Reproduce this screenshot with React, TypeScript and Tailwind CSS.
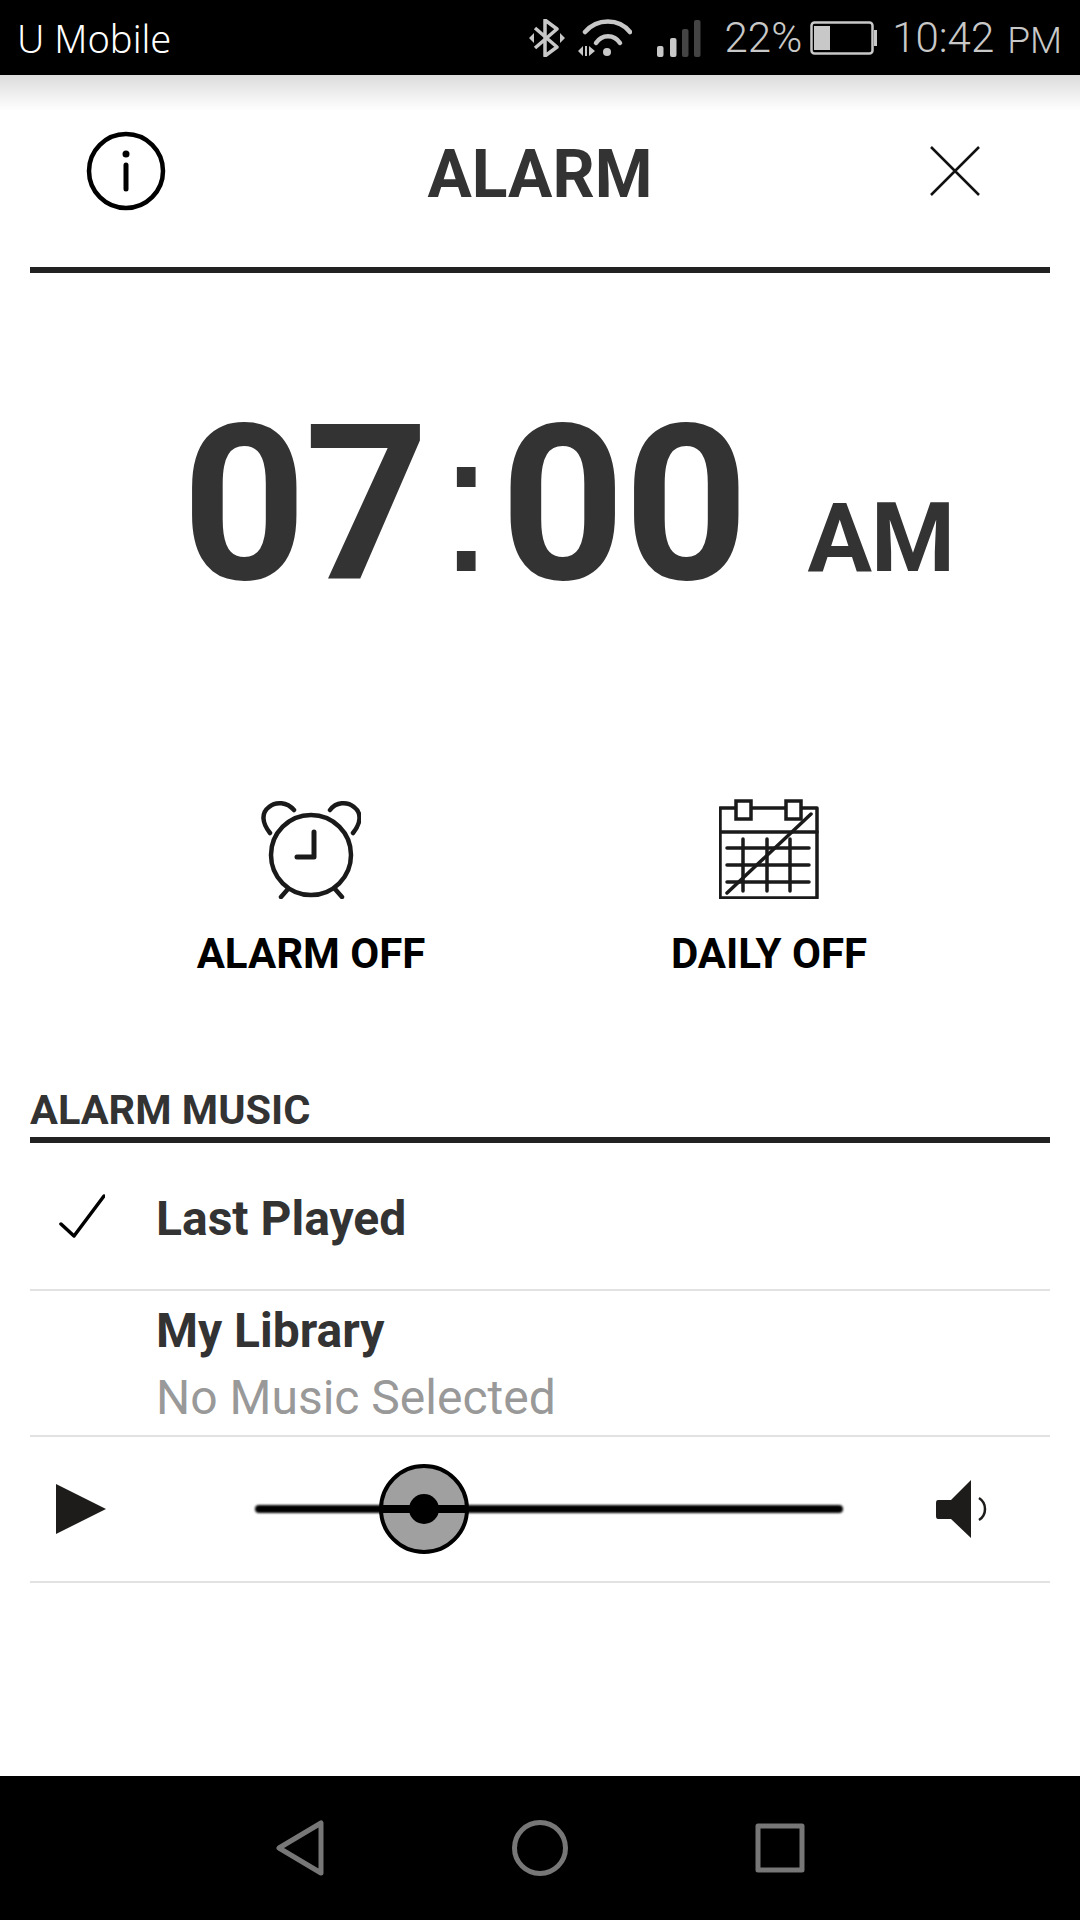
import { useState } from "react";

const roboto = "font-['Roboto',sans-serif]";

function Bluetooth() {
  return (
    <svg width="36" height="38" viewBox="0 0 36 38" fill="none" stroke="#c8c8c8" strokeWidth="3.5">
      <path d="M6 9 L28 28 L16 37 V1 L28 10 L6 29" strokeLinejoin="round" />
      <path d="M0 19 L5 14 V24 Z M36 19 L31 14 V24 Z" fill="#c8c8c8" stroke="none" />
    </svg>
  );
}

function Wifi() {
  return (
    <svg width="54" height="38" viewBox="0 0 54 38" fill="none" stroke="#c8c8c8" strokeWidth="4.5" strokeLinecap="round">
      <path d="M7 13 C19 -1 41 -1 52 13" />
      <path d="M18 24 C24 15 36 15 42 24" />
      <circle cx="29" cy="33" r="4" fill="#c8c8c8" stroke="none" />
      <path d="M0 32 L5 27 V37 Z M7 27 H9 V37 H7 Z M11 27 L17 32 L11 37 Z" fill="#c8c8c8" stroke="none" />
    </svg>
  );
}

function Signal() {
  return (
    <svg width="44" height="38" viewBox="0 0 44 38">
      <rect x="0" y="27" width="6.5" height="11" rx="2" fill="#c8c8c8" />
      <rect x="13" y="19" width="6.5" height="19" rx="2" fill="#c8c8c8" />
      <rect x="25" y="10" width="6.5" height="28" rx="2" fill="#444444" />
      <rect x="37" y="1" width="6.5" height="37" rx="2" fill="#444444" />
    </svg>
  );
}

function Battery() {
  return (
    <svg width="67" height="34" viewBox="0 0 67 34" fill="none">
      <rect x="1.5" y="1.5" width="61" height="31" rx="3" stroke="#c8c8c8" strokeWidth="2.5" />
      <rect x="4" y="5" width="16" height="24" fill="#c8c8c8" />
      <path d="M64 9 H67 V25 H64 Z" fill="#c8c8c8" />
    </svg>
  );
}

function StatusBar() {
  return (
    <div className="flex h-[75px] items-center bg-black pl-[17px] pr-[18px]">
      <span className="font-['Noto_Sans',sans-serif] text-[38px] font-light leading-none text-white">U Mobile</span>
      <div className={`ml-auto flex items-center text-[#c8c8c8] font-light ${roboto}`}>
        <Bluetooth />
        <span className="w-[13px]" />
        <Wifi />
        <span className="w-[25px]" />
        <Signal />
        <span className="w-[24px]" />
        <span className="text-[42px] leading-none">22%</span>
        <span className="w-[8px]" />
        <Battery />
        <span className="w-[15px]" />
        <span className="text-[42px] leading-none">10:42</span>
        <span className="ml-[13px] mt-[5px] text-[37px] leading-none">PM</span>
      </div>
    </div>
  );
}

function Header() {
  return (
    <div className="mx-[30px] grid h-[198px] grid-cols-[1fr_auto_1fr] items-center border-b-[6px] border-[#222222]">
      <svg width="80" height="80" viewBox="0 0 80 80" fill="none" stroke="#000" strokeLinecap="round" className="ml-[56px]">
        <circle cx="40" cy="40" r="37" strokeWidth="4.5" />
        <circle cx="40" cy="23" r="3.5" fill="#000" stroke="none" />
        <path d="M40 34 V58" strokeWidth="5" />
      </svg>
      <h1 className={`mt-[8px] text-[66px] font-bold leading-none text-[#333333] ${roboto}`}>ALARM</h1>
      <svg width="50" height="50" viewBox="0 0 50 50" stroke="#111" strokeWidth="2.5" className="mr-[70px] justify-self-end">
        <path d="M1 1 L49 49 M49 1 L1 49" />
      </svg>
    </div>
  );
}

function TimeDisplay() {
  return (
    <div className={`flex h-[526px] items-baseline pl-[182px] pt-[118px] font-bold leading-none text-[#333333] ${roboto}`}>
      <span className="text-[217px] leading-[228px] tracking-[-2px]">07</span>
      <span className="ml-[12px] mr-[7px] -translate-y-[8px] font-['Liberation_Sans',sans-serif] text-[196px] font-normal">:</span>
      <span className="text-[217px] leading-[228px] tracking-[-1px]">00</span>
      <span className="ml-[60px] -translate-y-[8px] text-[96px] tracking-[-1px]">AM</span>
    </div>
  );
}

function AlarmIcon() {
  return (
    <svg width="100" height="100" viewBox="0 0 100 100" fill="none" stroke="#1a1a1a" strokeWidth="4.5" strokeLinecap="round">
      <circle cx="50" cy="56" r="40" />
      <path d="M53 33 V58 H36" strokeWidth="5" strokeLinejoin="round" />
      <path d="M9 34 C1 24 0 14 8 8 C15 2 26 3 33 11" />
      <path d="M92 34 C100 24 101 14 93 8 C86 2 75 3 69 11" />
      <path d="M27 90 L20 98 M74 90 L81 98" />
    </svg>
  );
}

function CalendarIcon() {
  return (
    <svg width="100" height="100" viewBox="0 0 100 100" fill="none" stroke="#1a1a1a" strokeWidth="3.5" strokeLinecap="round">
      <path d="M1 9 H98 V99 H1 Z" fill="#fff" strokeLinejoin="round" />
      <path d="M1 33 H98" />
      <rect x="17" y="2" width="15" height="18" fill="#fff" />
      <rect x="67" y="2" width="15" height="18" fill="#fff" />
      <path d="M8 49 H90 M8 66 H90 M8 83 H90" />
      <path d="M24 40 V92 M48 40 V92 M71 40 V92" />
      <path d="M8 94 L92 15" />
    </svg>
  );
}

function Toggles() {
  const labelClass = `mt-[34px] text-[42px] font-bold leading-none text-black ${roboto}`;
  return (
    <div className="grid h-[287px] grid-cols-[622px_294px] items-start">
      <div className="flex flex-col items-center">
        <AlarmIcon />
        <span className={labelClass}>ALARM OFF</span>
      </div>
      <div className="flex flex-col items-center">
        <CalendarIcon />
        <span className={labelClass}>DAILY OFF</span>
      </div>
    </div>
  );
}

function Slider({ value }: { value: number }) {
  return (
    <div className="relative h-[8px] w-[588px]">
      <div className="absolute inset-0 rounded-full bg-black blur-[1px]" />
      <div
        className="absolute top-1/2 flex h-[90px] w-[90px] -translate-x-1/2 -translate-y-1/2 items-center justify-center rounded-full border-[4px] border-black bg-[#a0a0a0]"
        style={{ left: `${value}%` }}
      >
        <div className="absolute h-[8px] w-full bg-black" />
        <div className="relative h-[30px] w-[30px] rounded-full bg-black" />
      </div>
    </div>
  );
}

function MusicList() {
  const [volume] = useState(28.8);

  return (
    <div className={`mx-[30px] ${roboto}`}>
      <div className="border-b-[6px] border-[#222222] pb-[3px]">
        <h2 className="text-[41.5px] font-bold leading-[48px] text-[#333333]">ALARM MUSIC</h2>
      </div>

      <div className="flex h-[148px] items-center border-b-2 border-[#e2e2e2]">
        <svg width="46" height="44" viewBox="0 0 46 44" fill="none" stroke="#000" strokeWidth="3.5" strokeLinecap="round" strokeLinejoin="round" className="ml-[29px]">
          <path d="M2 30 L15 42 L45 2" />
        </svg>
        <span className="ml-[51px] mt-[6px] text-[48px] font-bold leading-none text-[#333333]">Last Played</span>
      </div>

      <div className="flex h-[146px] flex-col justify-center border-b-2 border-[#e2e2e2] pl-[126px] pt-[2px]">
        <span className="mt-[1px] text-[48px] font-bold leading-[56px] text-[#333333]">My Library</span>
        <span className="mt-[11px] text-[48px] leading-[56px] text-[#999999]">No Music Selected</span>
      </div>

      <div className="flex h-[146px] items-center border-b-2 border-[#e2e2e2]">
        <svg width="50" height="50" viewBox="0 0 50 50" className="ml-[26px]">
          <path d="M0 0 L50 25 L0 50 Z" fill="#1e1c1a" />
        </svg>
        <div className="ml-[149px]">
          <Slider value={volume} />
        </div>
        <svg width="52" height="58" viewBox="0 0 52 58" fill="none" className="ml-[93px]">
          <path d="M2 20 H15 L35 0 V58 L15 39 H2 Q0 39 0 36 V23 Q0 20 2 20 Z" fill="#1e1c1a" />
          <path d="M43 18 C51 23 51 35 43 40" stroke="#1e1c1a" strokeWidth="2.5" />
        </svg>
      </div>
    </div>
  );
}

function NavBar() {
  return (
    <div className="mt-auto flex h-[144px] items-center justify-center bg-black">
      <svg width="48" height="56" viewBox="0 0 48 56" fill="none" stroke="#777" strokeWidth="5" strokeLinejoin="round">
        <path d="M45 3 V53 L3 28 Z" />
      </svg>
      <svg width="56" height="56" viewBox="0 0 56 56" fill="none" stroke="#777" strokeWidth="5" className="ml-[188px]">
        <circle cx="28" cy="28" r="25.5" />
      </svg>
      <svg width="50" height="50" viewBox="0 0 50 50" fill="none" stroke="#777" strokeWidth="5" strokeLinejoin="round" className="ml-[187px]">
        <rect x="3" y="3" width="44" height="44" />
      </svg>
    </div>
  );
}

export default function App() {
  return (
    <div className="flex h-[1920px] w-[1080px] flex-col overflow-hidden bg-white">
      <StatusBar />
      <div className="h-0">
        <div className="h-[36px] bg-gradient-to-b from-[#dcdcdc] to-white" />
      </div>
      <Header />
      <TimeDisplay />
      <Toggles />
      <MusicList />
      <NavBar />
    </div>
  );
}
